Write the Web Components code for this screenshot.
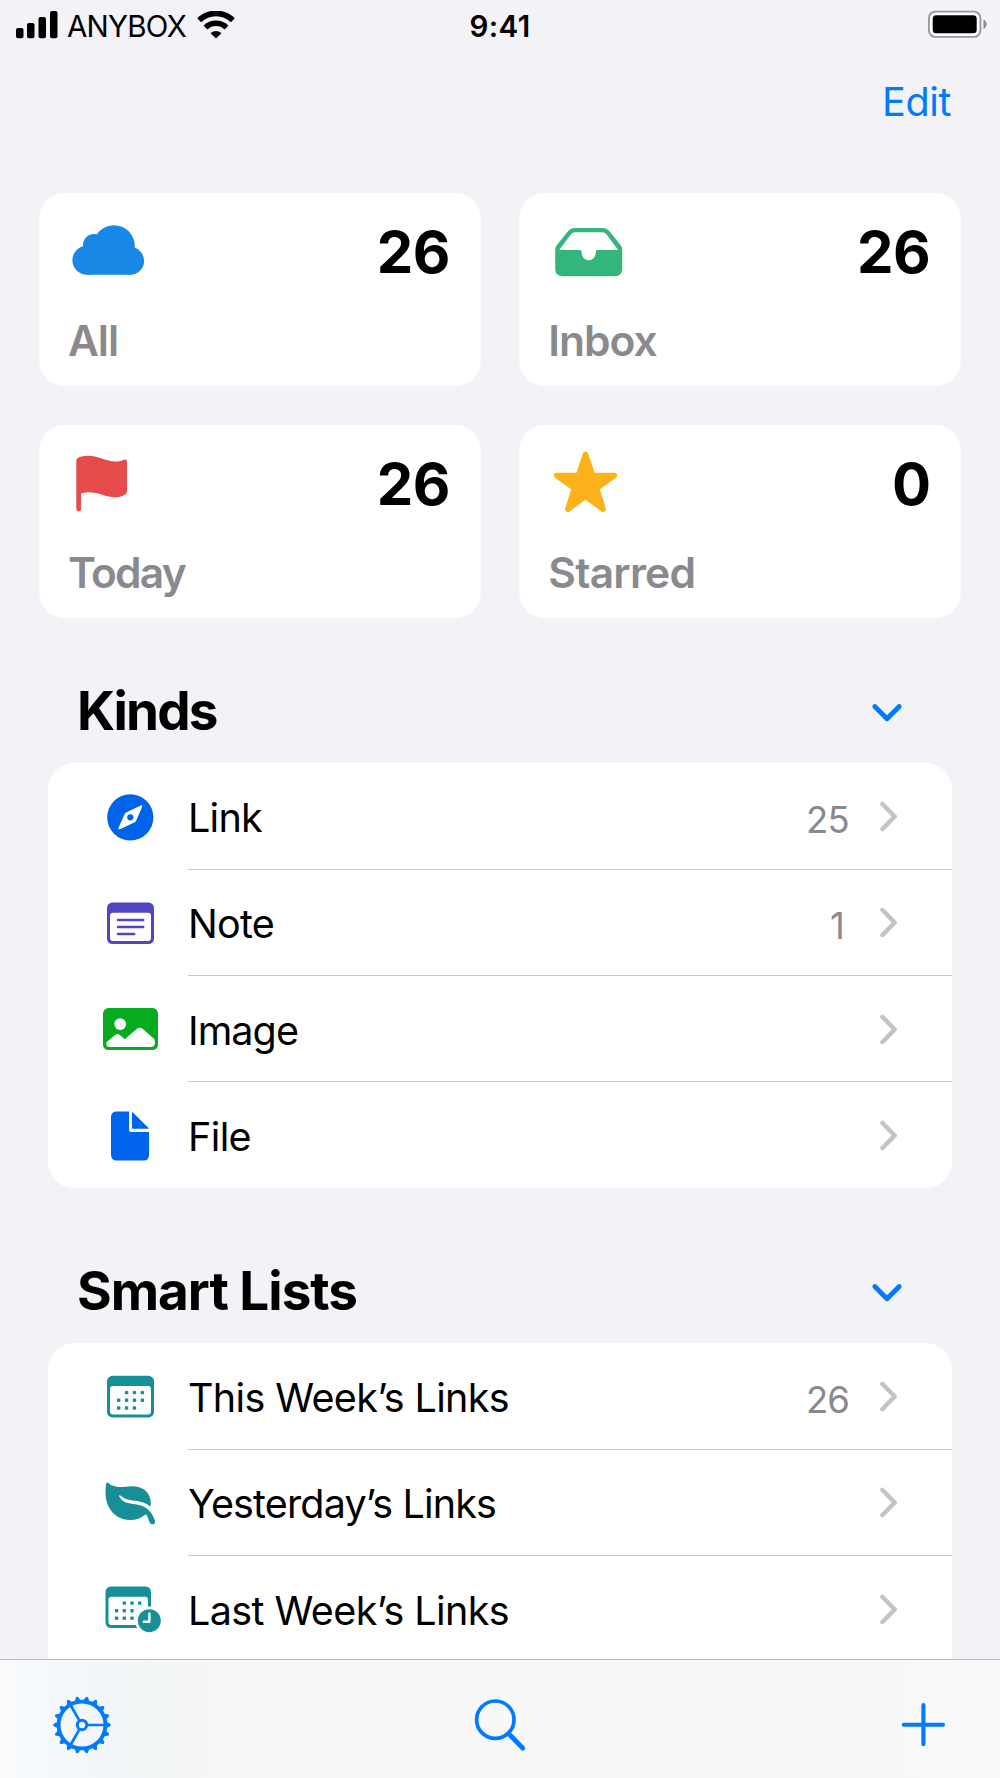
<!DOCTYPE html>
<html lang="en">
<head>
<meta charset="utf-8">
<title>Anybox</title>
<style>
	html, body {
		margin: 0;
		height: 100%;
	}
	body {
		font-family: Inter, "Liberation Sans", sans-serif;
		color: #000;
		background: #f2f2f7;
		overflow: hidden;
	}
</style>
</head>
<body>
<any-screen>
	<status-bar slot="status" carrier="ANYBOX" time="9:41"></status-bar>
	<nav-bar slot="nav"><fit-text width="69">Edit</fit-text></nav-bar>

	<summary-grid>
		<summary-card icon="cloud" count="26" count-width="73"><fit-text width="50">All</fit-text></summary-card>
		<summary-card icon="tray" count="26" count-width="73"><fit-text width="108.5">Inbox</fit-text></summary-card>
		<summary-card icon="flag" count="26" count-width="73"><fit-text width="117">Today</fit-text></summary-card>
		<summary-card icon="star" count="0" count-width="38"><fit-text width="147">Starred</fit-text></summary-card>
	</summary-grid>

	<list-section>
		<fit-text slot="title" width="139.5">Kinds</fit-text>
		<list-row icon="compass" count="25" count-width="43"><fit-text width="74">Link</fit-text></list-row>
		<list-row icon="note" count="1" count-width="19"><fit-text width="86">Note</fit-text></list-row>
		<list-row icon="image"><fit-text width="110">Image</fit-text></list-row>
		<list-row icon="file"><fit-text width="63">File</fit-text></list-row>
	</list-section>

	<list-section>
		<fit-text slot="title" width="280">Smart Lists</fit-text>
		<list-row icon="calendar" count="26" count-width="43"><fit-text width="321">This Week’s Links</fit-text></list-row>
		<list-row icon="leaf"><fit-text width="308">Yesterday’s Links</fit-text></list-row>
		<list-row icon="calendar-clock"><fit-text width="321">Last Week’s Links</fit-text></list-row>
		<list-row></list-row>
	</list-section>

	<tool-bar slot="toolbar"></tool-bar>
</any-screen>

<script>
(function() {
	const calendar = (x, y, w) => `
		<rect x="${x}" y="${y}" width="${w}" height="41.6" rx="5.5" fill="currentColor"/>
		<rect x="${x + 3}" y="${y + 10.3}" width="${w - 6}" height="28.4" rx="3" fill="#fff"/>`;

	const dots = (points) => points.map(([x, y]) =>
		`<rect x="${x - 1.7}" y="${y - 1.7}" width="3.4" height="3.4" rx=".8" fill="currentColor"/>`).join("");

	const teeth = () => {
		let out = "";
		for (let a = 0; a < 360; a += 20) {
			out += `<path d="M54 26.8l3.8 1.8a1.5 1.5 0 0 1 0 2.8L54 33.2z" fill="currentColor" transform="rotate(${a} 30 30)"/>`;
		}
		return out;
	};

	// name: [width, height, colour, markup]
	const ICONS = {
		cloud: [100, 70, "#1987e5", `<g fill="currentColor">
			<circle cx="27.9" cy="47.2" r="14.5"/><circle cx="35" cy="32" r="11"/>
			<circle cx="55" cy="33" r="20.8"/><circle cx="71.3" cy="47.9" r="13.8"/>
			<path d="M27.9 32.7H60l12 10v19H27.9z"/></g>`],
		tray: [100, 70, "#34b57b", `<path fill="currentColor" fill-rule="evenodd" d="M16.2 36.5q0-2.2 1.3-4L29.4 17.7Q31.6 15 35 15h29.4q3.4 0 5.6 2.7l11.9 14.8q1.3 1.8 1.3 4v19.3q0 7.5-7.5 7.5h-52q-7.5 0-7.5-7.5zM20.8 36.2q-.5.8.4.8h19.8q1.6 0 1.6 1.7c0 5 3 8.6 7.1 8.6s7.1-3.6 7.1-8.6q0-1.7 1.6-1.7h19.8q.9 0 .4-.8L67.4 21.2q-1.5-1.9-3.8-1.9H35.8q-2.3 0-3.8 1.9z"/>`],
		flag: [100, 70, "#e54b4b", `<path fill="currentColor" d="M17.3 15.5q0-1.5 1.2-2.3C26 9.2 35 10.8 43 13.5s13 4.2 21.7 1.4q3.3-1.2 3.3 1.8v29.5q0 2-1.8 3.2c-6 4-14.2 3.3-22.2.6-7.5-2.5-14.5-3.4-20.6-1.9q-1.4.4-1.4 1.5V64a2.35 2.35 0 0 1-4.7 0z"/>`],
		star: [100, 70, "#fcb21a", `<path fill="currentColor" stroke="currentColor" stroke-width="5.6" stroke-linejoin="round" d="M46.5 9.5l7 21h21.8L57.6 43.3l6.5 20.9-17.6-12.9-17.6 12.9 6.5-20.9-17.7-12.8h21.8z"/>`],
		compass: [80, 60, "#0063eb", `<circle cx="40.3" cy="30.3" r="23.1" fill="currentColor"/>
			<path fill="#fff" d="M50.8 18.4q2.1-.7 1.4 1.4L46 33.9q-.4 1-1.3 1.4L30 42.2q-2.2.7-1.5-1.5l6.2-13.6q.4-1 1.4-1.5z"/>
			<circle cx="40.3" cy="30.3" r="3.1" fill="currentColor"/>`],
		note: [80, 60, "#5146be", calendar(17, 9.4, 47) + `
			<path d="M28 27h25.2M28 34h25.2M28 41h16.2" stroke="currentColor" stroke-width="2.5" stroke-linecap="round"/>`],
		image: [80, 60, "#06ab20", `<rect x="13" y="9.1" width="55" height="42" rx="5.5" fill="currentColor"/>
			<circle cx="30.2" cy="25.1" r="5.9" fill="#fff"/>
			<path fill="#fff" d="M17 42.7l8.2-6.7q2.4-2 4.6-.1l5.1 4.4L46.3 30.2q3.4-2.8 6.8 0l10.6 9.3q1.2 1.2 1.2 2.9v1.6q0 4.1-4.1 4.1H20.3q-4.1 0-4.1-3.6 0-1.1.8-1.8z"/>`],
		file: [80, 60, "#0063eb", `<path fill="currentColor" d="M27 6.4h12v17.8q0 2.9 2.9 2.9H59v23q0 5.5-5.5 5.5H26.8q-5.8 0-5.8-5.8V12.2q0-5.8 6-5.8z"/>
			<path fill="currentColor" d="M42 7.1q.7.2 1.4.9l14.4 14.2q.9.8 1 1.6H42.9q-.9 0-.9-.9z"/>`],
		calendar: [80, 60, "#178f96", calendar(17, 8.8, 47) + dots([
			[36.6, 25.6], [44.5, 25.6], [52.4, 25.6],
			[28.7, 33.3], [36.6, 33.3], [44.5, 33.3], [52.4, 33.3],
			[28.7, 41], [36.6, 41], [44.5, 41]])],
		leaf: [80, 60, "#178f96", `<path fill="currentColor" d="M16.2 10.3q1-1.7 2.4-.2C24 16 34 13.4 42 13.2c12 0 18.8 7 18.8 17.4 0 1.3-.1 2.2-.4 2.9-5-3.8-9.5-4.8-15-5.7-6.5-1-10.5-1.5-15-5.4q-1.8-.8-1.2.8c3.2 7 9.5 6.8 16.5 8.1 11 2 16.2 7 19.3 16.5q.7 2.900-2 3.500-2.700.4-3.600-2.200c-1-3.500-2-6-3.300-7.800C42.500 52 25 47 18.500 33.500 14.800 25.500 15.200 18 16.200 10.300z"/>`],
		"calendar-clock": [80, 60, "#178f96", calendar(15.5, 7.4, 45.5) + dots([
			[34.3, 24.1], [42, 24.1], [49.7, 24.1],
			[26.6, 31.7], [34.3, 31.7], [42, 31.7],
			[26.6, 39.2], [34.3, 39.2], [42, 39.2]]) + `
			<circle cx="59.3" cy="41.7" r="14.2" fill="#fff"/>
			<circle cx="59.3" cy="41.7" r="11.5" fill="currentColor"/>
			<path d="M59.4 34.7v8.1h-5.6" fill="none" stroke="#fff" stroke-width="2.4" stroke-linecap="round" stroke-linejoin="round"/>`],
		disclosure: [20, 32, "#c4c4c7", `<path d="M3.5 4l12.2 12.5L3.5 29" fill="none" stroke="currentColor" stroke-width="4.6" stroke-linecap="round" stroke-linejoin="round"/>`],
		collapse: [32, 22, "#007aff", `<path d="M3.8 4.5l12.2 12.3L28.2 4.5" fill="none" stroke="currentColor" stroke-width="4.8" stroke-linecap="round" stroke-linejoin="round"/>`],
		gear: [60, 60, "#007aff", `<g fill="none" stroke="currentColor">
			<circle cx="30" cy="30" r="23.4" stroke-width="3.8"/>
			<circle cx="30" cy="30" r="4.7" stroke-width="3"/>
			<path d="M36 30h17M27 24.8L18.5 10M27 35.2L18.5 50" stroke-width="2.7"/></g>` + teeth()],
		search: [60, 60, "#007aff", `<g fill="none" stroke="currentColor">
			<circle cx="25.3" cy="24.7" r="18.7" stroke-width="3.7"/>
			<path d="M39.5 39.5l13.2 13.7" stroke-width="4.8" stroke-linecap="round"/></g>`],
		plus: [60, 60, "#007aff", `<path d="M30.4 10.1v39.2M10.8 29.7H50" stroke="currentColor" stroke-width="4.1" stroke-linecap="round"/>`],
		signal: [42, 28, "#000", `<g fill="currentColor"><rect y="17" width="7.5" height="10.3" rx="2"/>
			<rect x="11" y="12" width="7.5" height="15.3" rx="2"/><rect x="22.5" y="6" width="7.5" height="21.3" rx="2"/>
			<rect x="34" width="7.5" height="27.3" rx="2"/></g>`],
		wifi: [38, 28, "#000", `<g fill="none" stroke="currentColor" stroke-width="5.6">
			<path d="M2.2 9.2a24 24 0 0 1 33.6 0"/><path d="M8.5 16.4a15.2 15.2 0 0 1 21 0"/></g>
			<path fill="currentColor" d="M19 27.6l-5.5-5.3q5.5-4.6 11 0z"/>`],
		battery: [62, 30, "#000", `<rect x="1.9" y="1.6" width="51.5" height="25.3" rx="6.5" fill="#fff" stroke="#98989b" stroke-width="1.9"/>
			<rect x="5.7" y="5.2" width="44" height="18.1" rx="3.5" fill="currentColor"/>
			<path d="M56.5 9.6q3 1.4 3 4.7t-3 4.7z" fill="#8b8b8e"/>`]
	};

	function render(host, html) {
		const template = document.createElement("template");
		template.innerHTML = html;
		host.attachShadow({mode: "open"}).appendChild(template.content.cloneNode(true));
	}

	class AnyIcon extends HTMLElement {
		connectedCallback() {
			const [w, h, color, markup] = ICONS[this.getAttribute("name")];
			render(this, `
				<style>
					:host { display: block; flex: none; width: ${w}px; height: ${h}px; color: ${color}; }
					svg { display: block; }
				</style>
				<svg width="${w}" height="${h}" viewBox="0 0 ${w} ${h}">${markup}</svg>`);
		}
	}

	// Tracks its text so that the line takes up the given width.
	class FitText extends HTMLElement {
		connectedCallback() {
			render(this, `
				<style>
					:host { display: inline-block; white-space: nowrap; }
					span { display: inline-block; }
				</style>
				<span><slot></slot></span>`);
			const span = this.shadowRoot.querySelector("span");
			const width = Number(this.getAttribute("width"));
			const count = this.textContent.length;
			span.style.letterSpacing = (width - span.getBoundingClientRect().width) / count + "px";
		}
	}

	class AnyScreen extends HTMLElement {
		constructor() {
			super();
			render(this, `
				<style>
					:host { display: flex; flex-direction: column; width: 1000px; height: 1778px; }
					main { flex: 1; min-height: 0; overflow: hidden; }
				</style>
				<slot name="status"></slot>
				<slot name="nav"></slot>
				<main><slot></slot></main>
				<slot name="toolbar"></slot>`);
		}
	}

	class StatusBar extends HTMLElement {
		connectedCallback() {
			render(this, `
				<style>
					:host {
						display: grid;
						grid-template-columns: 1fr auto 1fr;
						align-items: center;
						height: 50px;
						padding: 0 11px 0 16px;
						box-sizing: border-box;
						font-size: 29.5px;
					}
					.left { display: flex; align-items: center; }
					.left fit-text { margin: 1px 11px 0 9px; }
					.time { font-weight: 600; margin: 1px 5px 0 0; }
					.battery { justify-self: end; }
				</style>
				<div class="left">
					<any-icon name="signal"></any-icon>
					<fit-text width="119">${this.getAttribute("carrier")}</fit-text>
					<any-icon name="wifi"></any-icon>
				</div>
				<fit-text class="time" width="61">${this.getAttribute("time")}</fit-text>
				<any-icon class="battery" name="battery"></any-icon>`);
		}
	}

	class NavBar extends HTMLElement {
		constructor() {
			super();
			render(this, `
				<style>
					:host {
						display: flex;
						justify-content: flex-end;
						align-items: center;
						height: 103px;
						padding-right: 49px;
						color: #007aff;
						font-size: 39.5px;
					}
				</style>
				<slot></slot>`);
		}
	}

	class SummaryGrid extends HTMLElement {
		constructor() {
			super();
			render(this, `
				<style>
					:host {
						display: grid;
						grid-template-columns: 1fr 1fr;
						grid-auto-rows: 193.3px;
						gap: 38.6px;
						padding: 40.2px 39px 0;
					}
				</style>
				<slot></slot>`);
		}
	}

	class SummaryCard extends HTMLElement {
		connectedCallback() {
			render(this, `
				<style>
					:host {
						display: flex;
						flex-direction: column;
						justify-content: space-between;
						box-sizing: border-box;
						padding: 20px 31px 19px 20px;
						border-radius: 26px;
						background: #fff;
					}
					.top { display: flex; justify-content: space-between; }
					.count { font-size: 58px; font-weight: 700; line-height: 78px; }
					.label { font-size: 42.5px; font-weight: 600; line-height: 52px; padding-left: 9px; color: #8a8a8e; }
				</style>
				<div class="top">
					<any-icon name="${this.getAttribute("icon")}"></any-icon>
					<fit-text class="count" width="${this.getAttribute("count-width")}">${this.getAttribute("count")}</fit-text>
				</div>
				<div class="label"><slot></slot></div>`);
		}
	}

	class ListSection extends HTMLElement {
		constructor() {
			super();
			render(this, `
				<style>
					:host { display: block; padding: 0 48px 10px; }
					header {
						display: flex;
						justify-content: space-between;
						align-items: center;
						height: 94px;
						padding: 48px 49px 3px 29px;
					}
					.title { font-size: 53px; font-weight: 700; line-height: 64px; margin-top: -5px; }
					.rows { border-radius: 26px; background: #fff; overflow: hidden; }
				</style>
				<header>
					<div class="title"><slot name="title"></slot></div>
					<any-icon name="collapse"></any-icon>
				</header>
				<div class="rows"><slot></slot></div>`);
		}
	}

	// A row without an icon stays blank.
	class ListRow extends HTMLElement {
		connectedCallback() {
			const icon = this.getAttribute("icon");
			const count = this.getAttribute("count");
			render(this, `
				<style>
					:host { display: flex; height: 106.25px; }
					.icon { display: flex; align-items: center; width: 98px; padding-left: 42px; }
					.body {
						flex: 1;
						display: flex;
						align-items: center;
						box-sizing: border-box;
						padding-right: 53px;
						border-bottom: 1px solid #c9c9cb;
					}
					:host(:last-child) .body { border-bottom: 0; }
					.label { flex: 1; font-size: 39.5px; padding-top: 4px; }
					.count { font-size: 36.5px; color: #8a8a8e; margin: 7px 30px 0 0; }
				</style>
				<div class="icon">${icon ? `<any-icon name="${icon}"></any-icon>` : ""}</div>
				<div class="body">
					<div class="label"><slot></slot></div>
					${count ? `<fit-text class="count" width="${this.getAttribute("count-width")}">${count}</fit-text>` : ""}
					${icon ? `<any-icon name="disclosure"></any-icon>` : ""}
				</div>`);
		}
	}

	class ToolBar extends HTMLElement {
		constructor() {
			super();
			render(this, `
				<style>
					:host {
						display: flex;
						justify-content: space-between;
						box-sizing: border-box;
						height: 119px;
						padding: 35px 47px 0 52px;
						border-top: 1px solid #bcbcbe;
						background: linear-gradient(90deg, #f9fbfd 0, #f4f7f9 80px, #f3f6f7 150px, #f6f6f6 240px, #f8f8f8 500px, #f8f8f8 900px, #f9f9fb 1000px);
					}
					.search { margin-right: 5px; }
				</style>
				<any-icon name="gear"></any-icon>
				<any-icon class="search" name="search"></any-icon>
				<any-icon name="plus"></any-icon>`);
		}
	}

	customElements.define("any-icon", AnyIcon);
	customElements.define("any-screen", AnyScreen);
	customElements.define("status-bar", StatusBar);
	customElements.define("nav-bar", NavBar);
	customElements.define("summary-grid", SummaryGrid);
	customElements.define("summary-card", SummaryCard);
	customElements.define("list-section", ListSection);
	customElements.define("list-row", ListRow);
	customElements.define("tool-bar", ToolBar);
	// last, so that the text is measured with the fonts of the elements round it
	customElements.define("fit-text", FitText);
})();
</script>
</body>
</html>
